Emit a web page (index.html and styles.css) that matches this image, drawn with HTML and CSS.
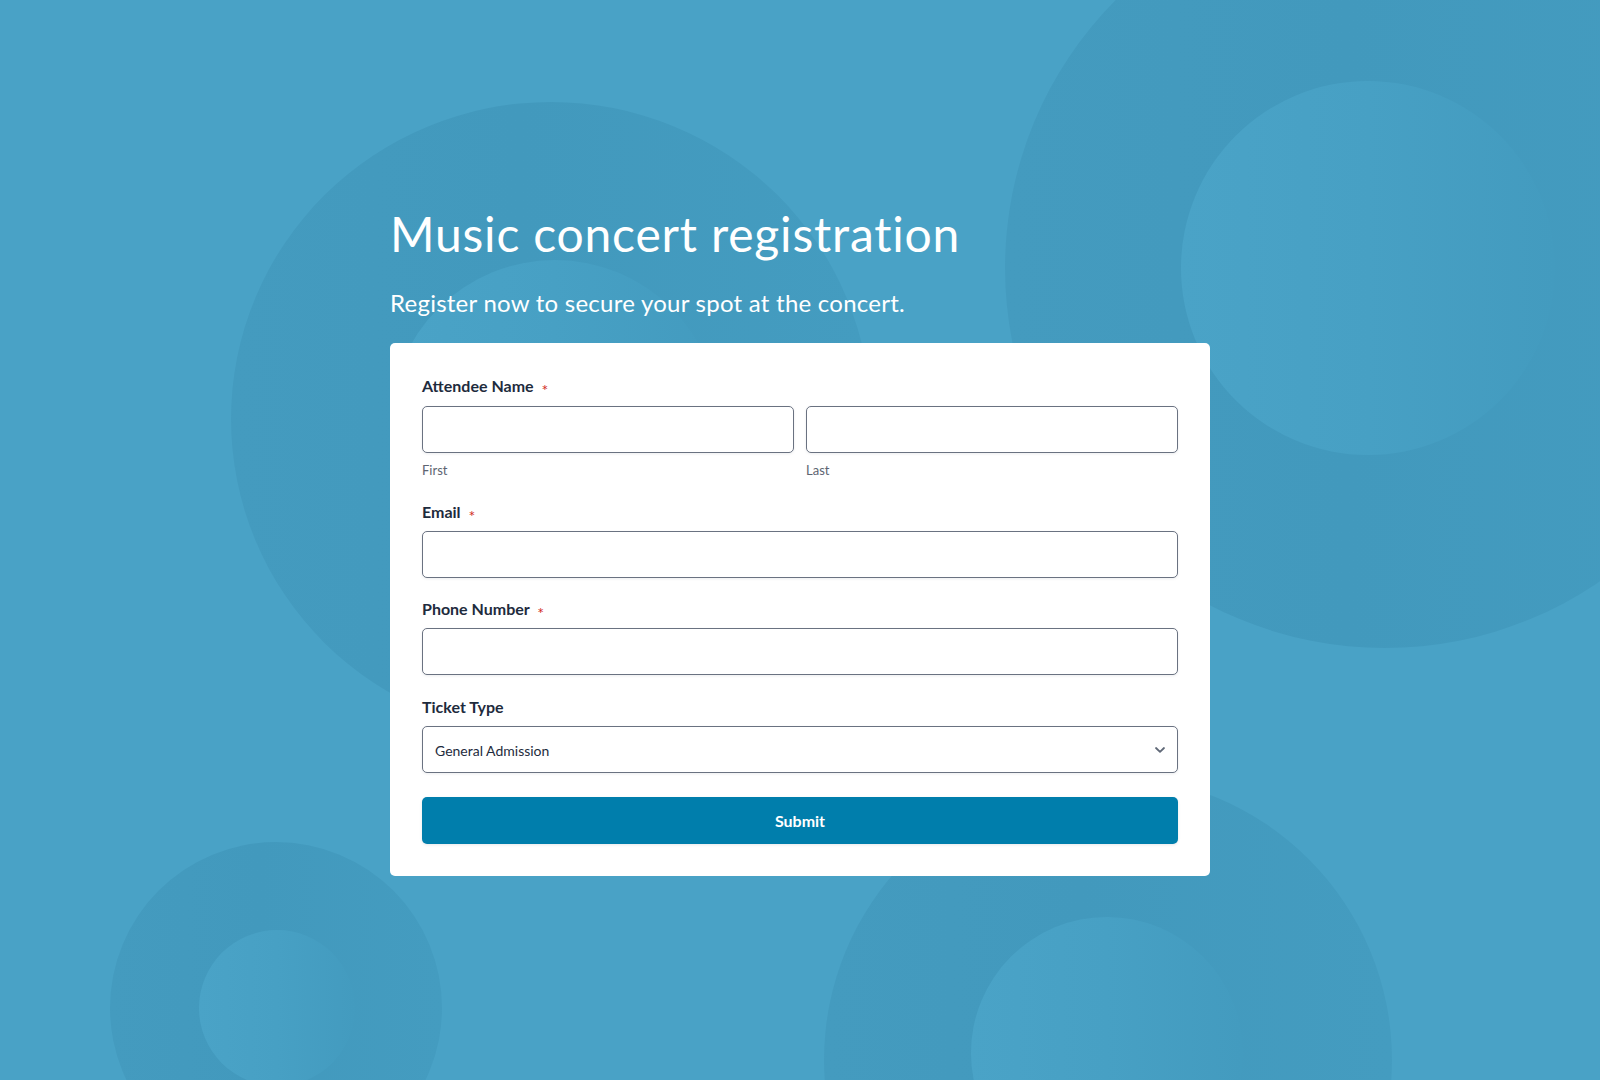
FILE: index.html
```html
<!DOCTYPE html>
<html lang="en">
<head>
<meta charset="utf-8">
<title>Music concert registration</title>
<link rel="stylesheet" href="styles.css">
</head>
<body>
<div class="backdrop" aria-hidden="true">
  <div class="ring ring-a"></div>
  <div class="dot dot-a"></div>
  <div class="ring ring-b"></div>
  <div class="dot dot-b"></div>
  <div class="ring ring-c"></div>
  <div class="dot dot-c"></div>
  <div class="ring ring-d"></div>
  <div class="dot dot-d"></div>
</div>
<main class="page">
  <h1 class="title">Music concert registration</h1>
  <p class="subtitle">Register now to secure your spot at the concert.</p>
  <form class="card">
    <div class="field field-name">
      <div class="label">Attendee Name <span class="req">*</span></div>
      <div class="pair">
        <div class="sub">
          <input class="input" type="text">
          <div class="hint">First</div>
        </div>
        <div class="sub">
          <input class="input" type="text">
          <div class="hint">Last</div>
        </div>
      </div>
    </div>
    <div class="field">
      <div class="label">Email <span class="req">*</span></div>
      <input class="input" type="email">
    </div>
    <div class="field">
      <div class="label">Phone Number <span class="req">*</span></div>
      <input class="input" type="tel">
    </div>
    <div class="field">
      <div class="label">Ticket Type</div>
      <div class="select">
        <span class="select-value">General Admission</span>
        <svg class="chev" width="12" height="8" viewBox="0 0 12 8"><path d="M2 2 6 5.8 10 2" fill="none" stroke="#5f6877" stroke-width="1.8" stroke-linecap="round" stroke-linejoin="round"/></svg>
      </div>
    </div>
    <button class="submit" type="button">Submit</button>
  </form>
</main>
</body>
</html>
```

FILE: styles.css
```css
html, body {
  margin: 0;
  padding: 0;
}
body {
  width: 1600px;
  height: 1080px;
  overflow: hidden;
  position: relative;
  background: #49a2c6;
  font-family: Lato, "Open Sans", sans-serif;
}
.backdrop {
  position: absolute;
  inset: 0;
  overflow: hidden;
}
.ring, .dot {
  position: absolute;
  border-radius: 50%;
}
.ring {
  background: linear-gradient(90deg, #449bbf 0%, #4299bd 45%, #449cc0 100%);
}
.dot {
  background: linear-gradient(90deg, #4aa3c7 0%, #47a0c4 50%, #439bbf 100%);
}
.ring-a { left: 1005px; top: -112px; width: 760px; height: 760px; }
.dot-a { left: 1181px; top: 81px; width: 374px; height: 374px; }
.ring-b { left: 231px; top: 102px; width: 640px; height: 634px; }
.dot-b { left: 390px; top: 260px; width: 330px; height: 330px; }
.ring-c { left: 110px; top: 842px; width: 332px; height: 332px; }
.dot-c { left: 199px; top: 930px; width: 156px; height: 156px; }
.ring-d { left: 824px; top: 776px; width: 568px; height: 568px; }
.dot-d { left: 971px; top: 917px; width: 272px; height: 272px; }

.page {
  position: relative;
  width: 820px;
  margin-left: 390px;
  padding-top: 206px;
}
.title {
  margin: 0;
  font-size: 48px;
  line-height: 56px;
  font-weight: 400;
  letter-spacing: 0.8px;
  color: #ffffff;
}
.subtitle {
  margin: 27px 0 26px;
  font-size: 24px;
  line-height: 28px;
  letter-spacing: 0.25px;
  color: #ffffff;
}
.card {
  background: #ffffff;
  border-radius: 5px;
  padding: 33px 32px 32px;
  display: flex;
  flex-direction: column;
}
.field {
  display: flex;
  flex-direction: column;
  margin-bottom: 21.5px;
}
.label {
  font-size: 16px;
  line-height: 20px;
  font-weight: 700;
  color: #1e2b3d;
  margin-bottom: 9px;
}
.field-name {
  margin-bottom: 22.5px;
}
.field-name .label {
  margin-bottom: 10px;
}
.req {
  color: #d22d1e;
  font-size: 16px;
  line-height: 0;
  font-weight: 400;
  margin-left: 4px;
  vertical-align: -4px;
}
.pair {
  display: grid;
  grid-template-columns: 1fr 1fr;
  gap: 12px;
}
.sub {
  display: flex;
  flex-direction: column;
}
.input, .select {
  box-sizing: border-box;
  height: 47px;
  width: 100%;
  margin: 0;
  border: 1px solid #6a7281;
  border-radius: 5px;
  background: #ffffff;
  box-shadow: 0 1px 3px rgba(15, 30, 50, 0.08);
  font-family: inherit;
}
.hint {
  margin-top: 8px;
  font-size: 13px;
  line-height: 18px;
  color: #5d6472;
}
.select {
  display: flex;
  align-items: center;
  justify-content: space-between;
  padding: 0 11px 0 12px;
}
.select-value {
  font-size: 14px;
  color: #1e2b3d;
  padding-top: 3px;
}
.chev {
  margin-top: 1px;
}
.submit {
  margin-top: 2.5px;
  height: 47px;
  padding-top: 2px;
  border: 0;
  border-radius: 5px;
  background: #007eac;
  color: #ffffff;
  font-family: inherit;
  font-size: 16px;
  font-weight: 700;
  box-shadow: 0 1px 3px rgba(15, 30, 50, 0.1);
}
```
